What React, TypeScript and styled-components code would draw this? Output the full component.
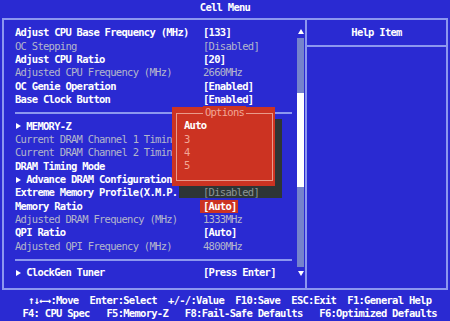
import styled, { createGlobalStyle } from "styled-components";

const BLUE = "#2a2ad2";
const LINE = "#8c97ef";
const GREY = "#b3b6cc";
const RED = "#cc3322";
const SALMON = "#f2a796";
const ROW = "13.33px";

type Item =
  | { sep: true }
  | {
      label: string;
      value?: string;
      dim?: boolean;
      sub?: boolean;
      mark?: "selected" | "shaded";
    };

const items: Item[] = [
  { label: "Adjust CPU Base Frequency (MHz)", value: "[133]" },
  { label: "OC Stepping", value: "[Disabled]", dim: true },
  { label: "Adjust CPU Ratio", value: "[20]" },
  { label: "Adjusted CPU Frequency (MHz)", value: "2660MHz", dim: true },
  { label: "OC Genie Operation", value: "[Enabled]" },
  { label: "Base Clock Button", value: "[Enabled]" },
  { sep: true },
  { label: "MEMORY-Z", sub: true },
  { label: "Current DRAM Channel 1 Timing", dim: true },
  { label: "Current DRAM Channel 2 Timing", dim: true },
  { label: "DRAM Timing Mode", value: "[Auto]" },
  { label: "Advance DRAM Configuration", sub: true },
  { label: "Extreme Memory Profile(X.M.P.)", value: "[Disabled]", mark: "shaded" },
  { label: "Memory Ratio", value: "[Auto]", mark: "selected" },
  { label: "Adjusted DRAM Frequency (MHz)", value: "1333MHz", dim: true },
  { label: "QPI Ratio", value: "[Auto]" },
  { label: "Adjusted QPI Frequency (MHz)", value: "4800MHz", dim: true },
  { sep: true },
  { label: "ClockGen Tuner", value: "[Press Enter]", sub: true },
];

const options = ["Auto", "3", "4", "5"];

const GlobalStyle = createGlobalStyle`
  html, body {
    margin: 0;
    padding: 0;
    background: ${BLUE};
    overflow: hidden;
  }
`;

const Screen = styled.div`
  position: relative;
  width: 450px;
  height: 321px;
  background: ${BLUE};
  display: flex;
  flex-direction: column;
  font-family: "DejaVu Sans Mono", "Liberation Mono", monospace;
  font-size: 10.5px;
  letter-spacing: -0.72px;
  line-height: ${ROW};
  font-weight: bold;
  color: #fff;
`;

const TitleBar = styled.div`
  height: 18px;
  box-sizing: border-box;
  padding-top: 0.5px;
  text-align: center;
`;

const Frame = styled.div`
  height: 272px;
  margin: 0 2px;
  box-sizing: border-box;
  border: 2px solid ${LINE};
  display: flex;
`;

const LeftPane = styled.div`
  width: 301px;
  display: flex;
`;

const List = styled.div`
  flex: 1;
  padding: 6.33px 0 0 11px;
`;

const Row = styled.div<{ $dim?: boolean }>`
  display: flex;
  height: ${ROW};
  white-space: pre;
  color: ${(p) => (p.$dim ? GREY : "#fff")};
  font-weight: ${(p) => (p.$dim ? "normal" : "bold")};
`;

const Label = styled.div`
  width: 188px;
  flex: none;
  display: flex;
  align-items: center;
`;

const SubMark = styled.span`
  display: inline-block;
  width: 11.2px;
  flex: none;
  &::before {
    content: "";
    display: block;
    width: 0;
    height: 0;
    margin-left: 1px;
    border-top: 3px solid transparent;
    border-bottom: 3px solid transparent;
    border-left: 5px solid #fff;
  }
`;

const Value = styled.span<{ $mark?: "selected" | "shaded" }>`
  position: relative;
  ${(p) =>
    p.$mark === "selected" &&
    `
    background: ${RED};
    margin-left: -3px;
    padding: 0 1px 0 3px;
    color: #fff;
  `}
  ${(p) =>
    p.$mark === "shaded" &&
    `
    z-index: 3;
    color: #8c9696;
    font-weight: normal;
  `}
`;

const SepRow = styled.div`
  height: ${ROW};
  display: flex;
  align-items: center;
  padding-right: 5px;
  &::after {
    content: "";
    flex: 1;
    height: 2px;
    background: ${LINE};
  }
`;

const Scroll = styled.div`
  width: 7px;
  margin-right: 1px;
  display: flex;
  flex-direction: column;
  align-items: center;
`;

const ArrowUp = styled.div`
  margin: 9px 0 4px;
  width: 0;
  height: 0;
  border-left: 3px solid transparent;
  border-right: 3px solid transparent;
  border-bottom: 5px solid #fff;
`;

const ArrowDown = styled.div`
  margin-top: 4px;
  width: 0;
  height: 0;
  border-left: 3px solid transparent;
  border-right: 3px solid transparent;
  border-top: 5px solid #fff;
`;

const Track = styled.div`
  width: 7px;
  height: 229px;
  background: #7583cc;
`;

const Thumb = styled.div<{ $top: number; $size: number }>`
  margin-top: ${(p) => p.$top}px;
  height: ${(p) => p.$size}px;
  background: #fff;
`;

const HelpPane = styled.div`
  flex: 1;
  border-left: 2px solid ${LINE};
`;

const HelpHeader = styled.div`
  height: 25px;
  line-height: 25px;
  border-bottom: 2px solid ${LINE};
  text-align: center;
`;

const Footer = styled.div`
  flex: 1;
  padding-top: 3.5px;
  white-space: pre;
`;

const Popup = styled.div`
  position: absolute;
  left: 172px;
  top: 107px;
  width: 103px;
  height: 79px;
  box-sizing: border-box;
  padding: 6px 2px 5px 4px;
  background: ${RED};
  box-shadow: 7px 12px 0 #2d3535;
  z-index: 2;
`;

const PopupBox = styled.div`
  position: relative;
  height: 100%;
  box-sizing: border-box;
  border: 1px solid #e99a8a;
  padding: 5.33px 0 0 7px;
`;

const PopupTitle = styled.div`
  position: absolute;
  top: -7.67px;
  left: 0;
  right: 0;
  text-align: center;
  span {
    background: ${RED};
    padding: 0 2px;
    color: ${SALMON};
    font-weight: normal;
  }
`;

const Option = styled.div<{ $current?: boolean }>`
  height: ${ROW};
  color: ${(p) => (p.$current ? "#fff" : SALMON)};
  font-weight: ${(p) => (p.$current ? "bold" : "normal")};
`;

export default function App() {
  return (
    <Screen>
      <GlobalStyle />
      <TitleBar>Cell Menu</TitleBar>
      <Frame>
        <LeftPane>
          <List>
            {items.map((it, i) =>
              "sep" in it ? (
                <SepRow key={i} />
              ) : (
                <Row key={i} $dim={it.dim}>
                  <Label>
                    {it.sub && <SubMark />}
                    {it.label}
                  </Label>
                  {it.value && <Value $mark={it.mark}>{it.value}</Value>}
                </Row>
              )
            )}
          </List>
          <Scroll>
            <ArrowUp />
            <Track>
              <Thumb $top={55} $size={94} />
            </Track>
            <ArrowDown />
          </Scroll>
        </LeftPane>
        <HelpPane>
          <HelpHeader>Help Item</HelpHeader>
        </HelpPane>
      </Frame>
      <Footer>
        {"     ↑↓←→:Move  Enter:Select  +/-/:Value  F10:Save  ESC:Exit  F1:General Help\n"}
        {"    F4: CPU Spec   F5:Memory-Z   F8:Fail-Safe Defaults   F6:Optimized Defaults"}
      </Footer>
      <Popup>
        <PopupBox>
          <PopupTitle>
            <span>Options</span>
          </PopupTitle>
          {options.map((o, i) => (
            <Option key={o} $current={i === 0}>
              {o}
            </Option>
          ))}
        </PopupBox>
      </Popup>
    </Screen>
  );
}
